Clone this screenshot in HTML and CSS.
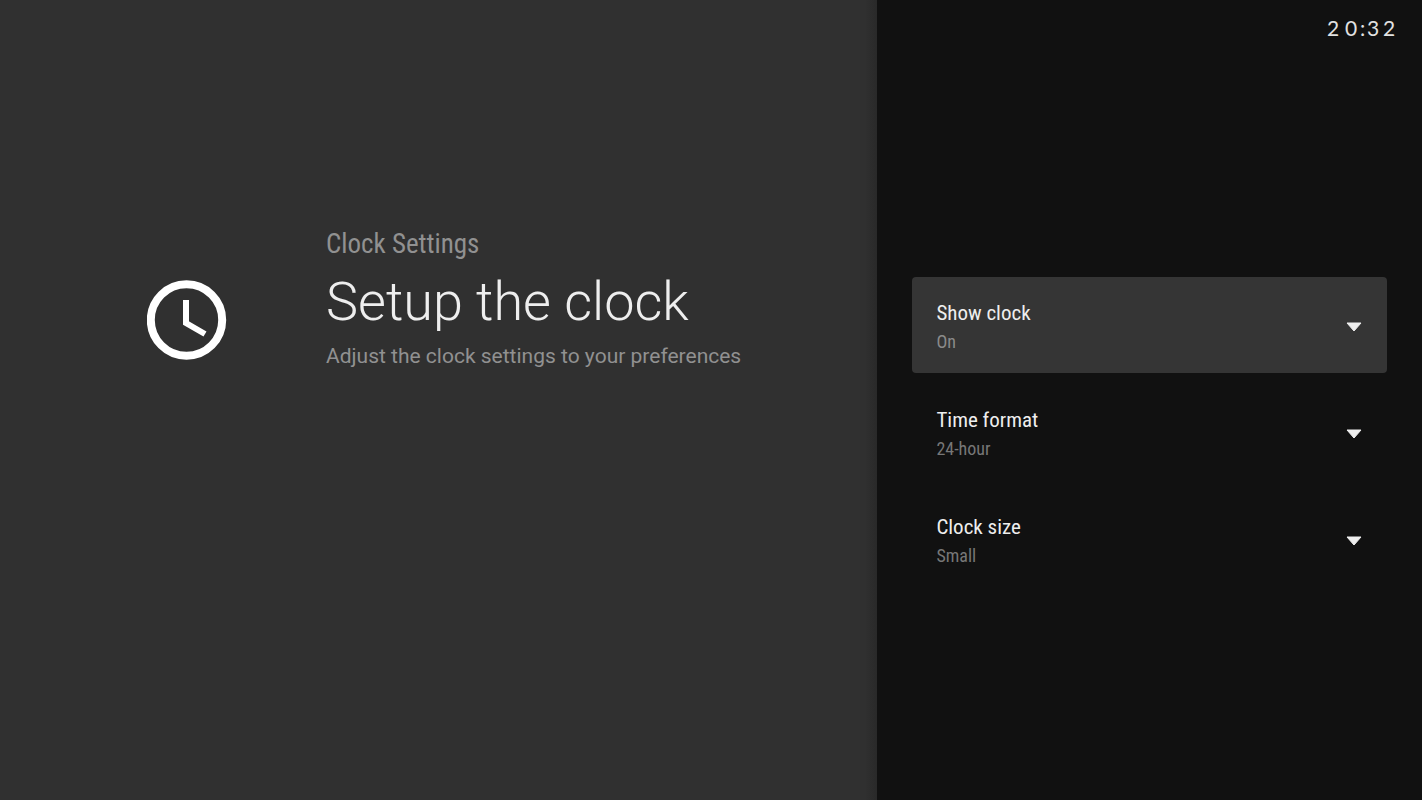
FILE: index.html
```
<!DOCTYPE html>
<html lang="en">
<head>
  <meta charset="UTF-8">
  <title>Clock Settings</title>
  <link rel="stylesheet" href="styles.css">
</head>
<body>
  <main class="guidance">
    <svg class="clock-icon" viewBox="0 0 80 80" aria-hidden="true">
      <circle cx="39.5" cy="40" r="35.7" />
      <path d="M39 20V43L58 54" />
    </svg>
    <div class="intro">
      <p class="breadcrumb">Clock Settings</p>
      <h1>Setup the clock</h1>
      <p class="description">Adjust the clock settings to your preferences</p>
    </div>
  </main>

  <aside class="actions">
    <header>
      <time class="time" datetime="20:32"><span>2</span><span>0</span><span class="colon">:</span><span>3</span><span class="last">2</span></time>
    </header>
    <form class="options">
      <div class="option active">
        <label for="show">Show clock</label>
        <select id="show">
          <option>On</option>
          <option>Off</option>
        </select>
        <svg class="arrow" viewBox="0 0 18 12" aria-hidden="true"><path d="M2 2H16L9 10Z" /></svg>
      </div>
      <div class="option">
        <label for="format">Time format</label>
        <select id="format">
          <option>24-hour</option>
          <option>12-hour</option>
        </select>
        <svg class="arrow" viewBox="0 0 18 12" aria-hidden="true"><path d="M2 2H16L9 10Z" /></svg>
      </div>
      <div class="option">
        <label for="size">Clock size</label>
        <select id="size">
          <option>Small</option>
          <option>Large</option>
        </select>
        <svg class="arrow" viewBox="0 0 18 12" aria-hidden="true"><path d="M2 2H16L9 10Z" /></svg>
      </div>
    </form>
  </aside>
</body>
</html>
```

FILE: styles.css
```
* {
  box-sizing: border-box;
}
body {
  display: flex;
  min-height: 100vh;
  margin: 0;
  background-color: #111;
  color: #eee;
  font-family: Roboto, sans-serif;
}
h1, p {
  margin: 0;
}

/* Left side */
.guidance {
  display: flex;
  align-items: flex-start;
  flex: 1;
  gap: 99px;
  padding: 228px 24px 24px 147px;
  background: linear-gradient(to left, #292929, #303030 12px);
}
.clock-icon {
  flex: none;
  width: 80px;
  height: 80px;
  margin-top: 52px;
  fill: none;
  stroke: #fff;
  stroke-width: 8;
}
.clock-icon path {
  stroke-width: 6;
}
.breadcrumb {
  color: #919191;
  font-family: "Roboto Condensed", Roboto, sans-serif;
  font-size: 27px;
  line-height: 32px;
}
h1 {
  font-size: 54px;
  font-weight: 300;
  line-height: 64px;
  margin-top: 10px;
}
.description {
  color: #919191;
  font-size: 21px;
  line-height: 24px;
  margin-top: 10px;
}

/* Right side */
.actions {
  display: flex;
  flex-direction: column;
  width: 38.3%;
}
header {
  display: flex;
  justify-content: flex-end;
  height: 64px;
  padding: 15px 26px;
}
.time {
  display: flex;
  color: #e2e2e2;
  font-family: Lato, sans-serif;
  font-size: 21px;
  line-height: 26px;
}
.time span {
  width: 18px;
  text-align: center;
}
.time .colon {
  width: 4px;
}
.time .last {
  width: 14px;
}
.options {
  display: flex;
  flex: 1;
  flex-direction: column;
  justify-content: center;
  gap: 11px;
  padding: 0 35px;
}
.option {
  display: grid;
  grid-template-columns: 1fr 18px;
  grid-template-rows: 28px 30px;
  align-content: center;
  align-items: center;
  height: 96px;
  padding: 4px 24px 0;
  border-radius: 4px;
  font-family: "Roboto Condensed", Roboto, sans-serif;
}
.option.active {
  background-color: #353535;
}
.option label {
  padding-top: 2px;
  font-size: 21px;
}
.option select {
  grid-row: 2;
  width: 100%;
  padding: 0;
  appearance: none;
  border: none;
  outline: none;
  background: none;
  color: #777;
  font-family: inherit;
  font-size: 18px;
}
.option.active select {
  color: #8a8a8a;
}
.arrow {
  grid-column: 2;
  grid-row: 1 / 3;
  width: 18px;
  height: 12px;
  fill: #eee;
  stroke: #eee;
  stroke-width: 1;
  stroke-linejoin: round;
}
```
